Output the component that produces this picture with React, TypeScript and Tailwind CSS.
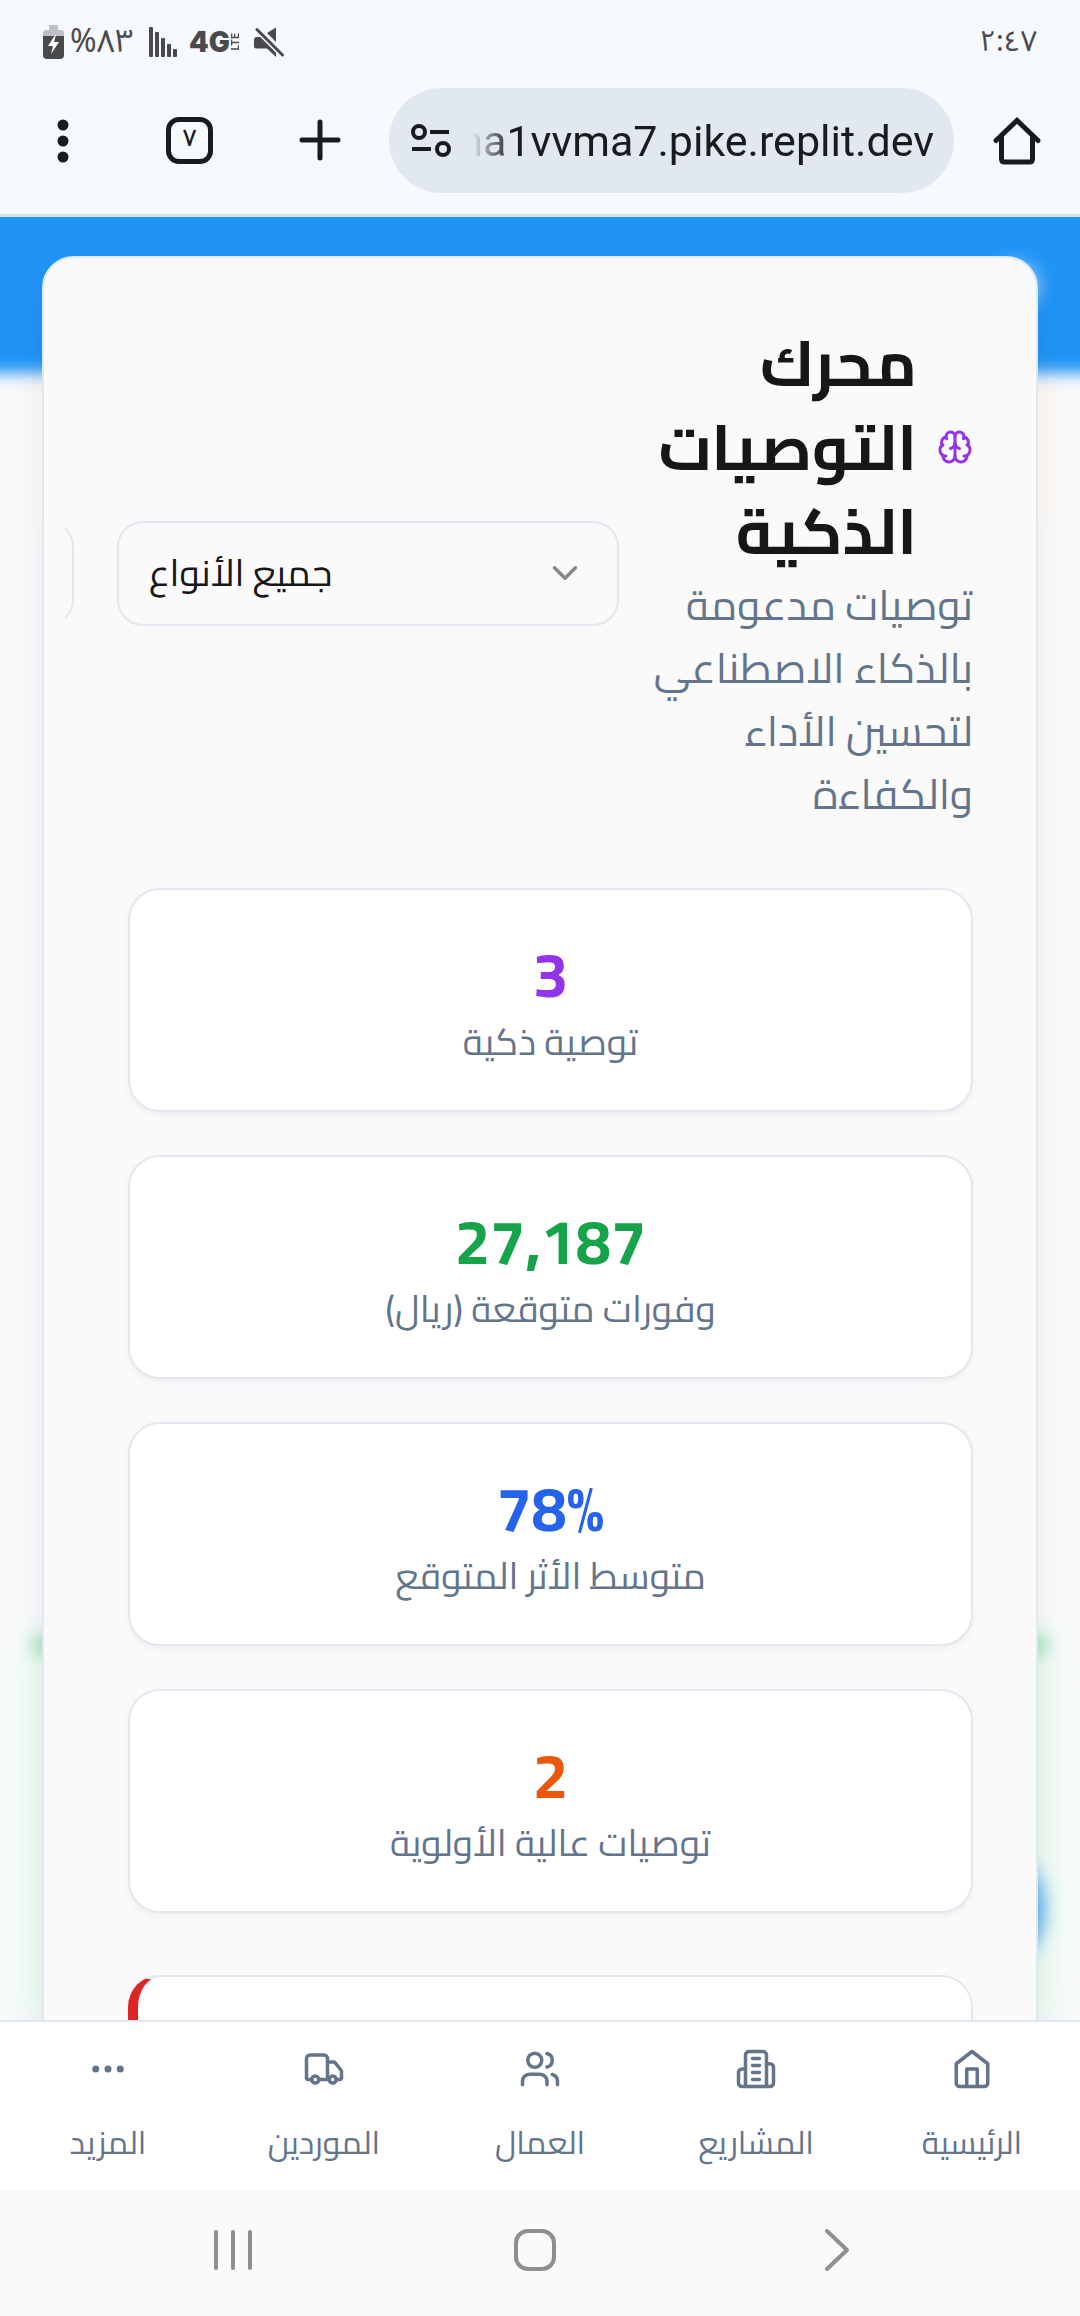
import type { ReactNode } from 'react';
import { Brain, ChevronDown } from 'lucide-react';

const stats = [
  { value: '3', label: 'توصية ذكية', color: 'text-[#9333ea]' },
  { value: '27,187', label: 'وفورات متوقعة (ريال)', color: 'text-[#16a34a]' },
  { value: '78%', label: 'متوسط الأثر المتوقع', color: 'text-[#2563eb]' },
  { value: '2', label: 'توصيات عالية الأولوية', color: 'text-[#ea580c]' },
];

function LineIcon({ children }: { children: ReactNode }) {
  return (
    <svg
      viewBox="0 0 24 24"
      className="size-[42px]"
      fill="none"
      stroke="currentColor"
      strokeWidth="2"
      strokeLinecap="round"
      strokeLinejoin="round"
      aria-hidden="true"
    >
      {children}
    </svg>
  );
}

const tabs = [
  {
    label: 'الرئيسية',
    icon: (
      <LineIcon>
        <path d="m3 9 9-7 9 7v11a2 2 0 0 1-2 2H5a2 2 0 0 1-2-2z" />
        <path d="M9 22V12h6v10" />
      </LineIcon>
    ),
  },
  {
    label: 'المشاريع',
    icon: (
      <LineIcon>
        <path d="M6 22V4a2 2 0 0 1 2-2h8a2 2 0 0 1 2 2v18Z" />
        <path d="M6 12H4a2 2 0 0 0-2 2v6a2 2 0 0 0 2 2h2" />
        <path d="M18 9h2a2 2 0 0 1 2 2v9a2 2 0 0 1-2 2h-2" />
        <path d="M10 6h4M10 10h4M10 14h4M10 18h4" />
      </LineIcon>
    ),
  },
  {
    label: 'العمال',
    icon: (
      <LineIcon>
        <path d="M16 21v-2a4 4 0 0 0-4-4H6a4 4 0 0 0-4 4v2" />
        <circle cx="9" cy="7" r="4" />
        <path d="M22 21v-2a4 4 0 0 0-3-3.87" />
        <path d="M16 3.13a4 4 0 0 1 0 7.75" />
      </LineIcon>
    ),
  },
  {
    label: 'الموردين',
    icon: (
      <LineIcon>
        <path d="M14 18V6a2 2 0 0 0-2-2H4a2 2 0 0 0-2 2v11a1 1 0 0 0 1 1h2" />
        <path d="M15 18H9" />
        <path d="M19 18h2a1 1 0 0 0 1-1v-3.65a1 1 0 0 0-.22-.624l-3.48-4.35A1 1 0 0 0 17.52 8H14" />
        <circle cx="17" cy="18" r="2" />
        <circle cx="7" cy="18" r="2" />
      </LineIcon>
    ),
  },
  {
    label: 'المزيد',
    icon: (
      <LineIcon>
        <circle cx="12" cy="12" r="1" />
        <circle cx="19" cy="12" r="1" />
        <circle cx="5" cy="12" r="1" />
      </LineIcon>
    ),
  },
];

function StatusBar() {
  return (
    <div className="flex h-[84px] items-center justify-between pl-[43px] pr-[43px] font-['Noto_Sans_Arabic','Noto_Sans',sans-serif] text-[#4a4a4c]">
      <div className="flex items-center">
        <svg viewBox="0 0 21 34" className="h-[34px] w-[21px]" aria-hidden="true">
          <path d="M6 0h9v5h3a3 3 0 0 1 3 3v4H0V8a3 3 0 0 1 3-3h3z" fill="#bdc0c6" />
          <path d="M0 11h21v19a4 4 0 0 1-4 4H4a4 4 0 0 1-4-4z" fill="#4a4a4c" />
          <path d="M12 10 5 21h5l-2 8 8-12h-5l2-7z" fill="#fff" />
        </svg>
        <span className="ml-[6px] w-[66px] text-[32px] leading-10">%٨٣</span>
        <svg viewBox="0 0 28 30" className="ml-[13px] h-[30px] w-7" fill="currentColor" aria-hidden="true">
          <rect x="0" y="0" width="4" height="30" rx="1" />
          <rect x="6" y="5" width="4" height="25" rx="1" />
          <rect x="12" y="11" width="4" height="19" rx="1" />
          <rect x="18" y="17" width="4" height="13" rx="1" />
          <rect x="24" y="22" width="4" height="8" rx="1" />
        </svg>
        <span className="ml-3 font-['Inter',sans-serif] text-[28px] font-black leading-7">4G</span>
        <span className="rotate-180 font-['Inter',sans-serif] text-[10px] font-bold leading-[10px] [writing-mode:vertical-rl]">
          LTE
        </span>
        <svg viewBox="0 0 30 30" className="ml-[14px] size-[30px]" fill="currentColor" aria-hidden="true">
          <path d="M13 6l9-5.500V15z" />
          <path d="M2 10h6l14 13v7l-9-8.500H2q-2 0-2-2v-7q0-2 2-2.500z" />
          <path d="M3 2.500 28.500 28" stroke="#f6faff" strokeWidth="6" />
          <path d="M3 2.500 28.500 28" stroke="currentColor" strokeWidth="3" strokeLinecap="round" />
        </svg>
      </div>
      <span className="text-[29px] leading-10">٢:٤٧</span>
    </div>
  );
}

function BrowserBar() {
  return (
    <div className="flex h-[130px] items-start pr-[39px] text-[#191c1f]">
      <button type="button" aria-label="القائمة" className="mt-[35px] ml-[57px]">
        <svg viewBox="0 0 12 44" className="h-11 w-3" fill="currentColor" aria-hidden="true">
          <circle cx="6" cy="6" r="5.500" />
          <circle cx="6" cy="22" r="5.500" />
          <circle cx="6" cy="38" r="5.500" />
        </svg>
      </button>
      <button
        type="button"
        className="mt-[33px] ml-[97px] flex size-[47px] items-center justify-center rounded-[13px] border-[5px] border-[#191c1f] pb-1 font-['Noto_Sans_Arabic','Noto_Sans',sans-serif] text-[24px] font-medium leading-8"
      >
        ٧
      </button>
      <button type="button" aria-label="علامة تبويب جديدة" className="mt-[35px] ml-[86px]">
        <svg viewBox="0 0 42 42" className="size-[42px]" stroke="currentColor" strokeWidth="5" strokeLinecap="round" aria-hidden="true">
          <path d="M21 3v36M3 21h36" />
        </svg>
      </button>
      <div className="mt-1 ml-[48px] flex h-[105px] min-w-0 flex-1 items-center rounded-full bg-[#e1e8f0] pl-[21px] pr-5">
        <svg viewBox="0 0 42 34" className="h-[34px] w-[42px] shrink-0" fill="none" stroke="currentColor" strokeWidth="4" aria-hidden="true">
          <circle cx="9" cy="8" r="6" />
          <path d="M20 8h19M2 25h19" />
          <circle cx="33" cy="25" r="6" />
        </svg>
        <div className="ml-5 flex min-w-0 flex-1 justify-end overflow-hidden [mask-image:linear-gradient(to_right,transparent,black_40px)]">
          <a href="#url" className="whitespace-nowrap font-['Roboto',sans-serif] text-[43px] leading-[60px]">
            na1vvma7.pike.replit.dev
          </a>
        </div>
      </div>
      <button type="button" aria-label="الصفحة الرئيسية" className="mt-[33px] ml-[39px]">
        <svg viewBox="0 0 48 48" className="size-12" fill="none" stroke="currentColor" strokeWidth="5" strokeLinecap="round" strokeLinejoin="miter" aria-hidden="true">
          <path d="M3 23.500 24 3.500l21 20" />
          <path d="M8.500 20v22q0 3 3 3h25q3 0 3-3V20" />
        </svg>
      </button>
    </div>
  );
}

function Header() {
  return (
    <header dir="rtl" className="flex items-center">
      <div className="w-[354px] shrink-0">
        <h1 className="flex items-center gap-5 text-[63px] font-bold leading-[84px] text-[#171717]">
          <Brain className="size-9 shrink-0 text-[#9333ea]" strokeWidth={2} aria-hidden="true" />
          <span>محرك التوصيات الذكية</span>
        </h1>
        <p className="w-[328px] text-[42px] leading-[63px] text-[#64748b]">
          توصيات مدعومة بالذكاء الاصطناعي لتحسين الأداء والكفاءة
        </p>
      </div>
      <div className="flex shrink-0 items-center gap-[43px]">
        <div className="relative w-[502px]" dir="ltr">
          <select
            aria-label="نوع التوصية"
            className="h-[105px] w-full appearance-none rounded-[26px] border-2 border-[#e2e8f0] bg-[#fafafa] pl-[30px] pr-20 text-left text-[37px] text-[#171717]"
          >
            <option>جميع الأنواع</option>
          </select>
          <ChevronDown
            className="pointer-events-none absolute top-1/2 right-[33px] size-[42px] -translate-y-1/2 text-[#888888]"
            strokeWidth={2}
            aria-hidden="true"
          />
        </div>
        <select
          aria-label="الأولوية"
          className="h-[105px] w-[502px] appearance-none rounded-[26px] border-2 border-[#e2e8f0] bg-[#fafafa]"
        />
      </div>
    </header>
  );
}

function Backdrop() {
  return (
    <div className="absolute inset-0 overflow-hidden bg-[#f8fafc]" aria-hidden="true">
      <div className="absolute inset-x-5 top-[150px] h-[170px] bg-[#fbf8f5] blur-[14px]" />
      <div className="absolute -inset-x-10 -top-10 h-[196px] bg-[#2094f5] blur-[8px]" />
      <div className="absolute inset-x-4 top-[1430px] bottom-0 rounded-[30px] bg-[#eefbf3] blur-[8px]" />
      <div className="absolute inset-x-[34px] top-[1420px] h-4 bg-[#7fdda0] blur-[9px]" />
      <div className="absolute top-[1622px] right-[36px] size-[140px] rounded-full bg-[#4aa8f2] blur-[9px]" />
      <div className="absolute top-[44px] right-[40px] size-[50px] rounded-[32px] bg-white/50 blur-[8px]" />
    </div>
  );
}

export default function App() {
  return (
    <div className="flex h-screen flex-col overflow-hidden bg-[#f9fafc] font-['Cairo','Noto_Sans_Arabic','Noto_Sans',sans-serif]">
      <div className="shrink-0 border-b-[3px] border-[#d3e3ec] bg-[#f6faff]">
        <StatusBar />
        <BrowserBar />
      </div>

      <main className="relative min-h-0 flex-1 overflow-hidden">
        <Backdrop />
        <section className="relative mx-[42px] mt-[39px] rounded-t-[32px] border-2 border-[#e2e8f0] bg-[#fafafa] px-[21px] shadow-[0_26px_32px_rgba(0,0,0,0.07)]">
          <div className="overflow-hidden pt-[63px] pr-[42px] pl-[63px]">
            <Header />
            <div className="mt-[63px] flex flex-col gap-[43px]">
              {stats.map((s) => (
                <article
                  key={s.label}
                  className="rounded-[32px] border-2 border-[#e2e8f0] bg-white py-[42px] text-center shadow-[0_3px_6px_rgba(0,0,0,0.05)]"
                >
                  <p className={`text-[63px] font-bold leading-[84px] ${s.color}`}>{s.value}</p>
                  <p dir="rtl" className="text-[37px] leading-[52px] text-[#64748b]">
                    {s.label}
                  </p>
                </article>
              ))}
            </div>
            <article className="mt-[62px] h-80 rounded-[32px] border-2 border-l-[10px] border-[#e2e8f0] border-l-[#dc2626] bg-white" />
          </div>
        </section>
      </main>

      <nav dir="rtl" className="grid h-[170px] shrink-0 grid-cols-5 border-t-2 border-[#e2e8f0] bg-white text-[#64748b]">
        {tabs.map((t) => (
          <a key={t.label} href="#tab" className="flex flex-col items-center pt-[26px]">
            {t.icon}
            <span className="mt-[31px] text-[32px] leading-[42px]">{t.label}</span>
          </a>
        ))}
      </nav>

      <div className="flex h-[126px] shrink-0 items-start bg-[#fafafa] pt-[38px] text-[#8f8f8f]">
        <button type="button" aria-label="التطبيقات الأخيرة" className="ml-[213px]">
          <svg viewBox="0 0 40 44" className="h-11 w-10" stroke="currentColor" strokeWidth="4" strokeLinecap="round" aria-hidden="true">
            <path d="M3 4v36M20 4v36M37 4v36" />
          </svg>
        </button>
        <button type="button" aria-label="الشاشة الرئيسية" className="ml-[260px]">
          <svg viewBox="0 0 44 44" className="size-11" fill="none" stroke="currentColor" strokeWidth="4" aria-hidden="true">
            <rect x="3" y="3" width="38" height="38" rx="12" />
          </svg>
        </button>
        <button type="button" aria-label="رجوع" className="ml-[267px]">
          <svg viewBox="0 0 26 44" className="h-11 w-[26px]" fill="none" stroke="currentColor" strokeWidth="4" strokeLinecap="round" strokeLinejoin="round" aria-hidden="true">
            <path d="M3 3l20 19L3 41" />
          </svg>
        </button>
      </div>
    </div>
  );
}
